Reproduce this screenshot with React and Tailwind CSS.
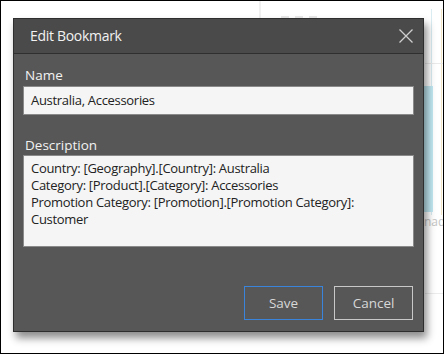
export default function App() {
  const font = { fontFamily: '"Open Sans", "Noto Sans", sans-serif' };
  return (
    <div className="w-[444px] h-[354px] border border-black bg-white relative overflow-hidden" style={font}>
      {/* faint background page */}
      <div className="absolute left-[258px] top-0 w-[2px] h-[20px] bg-[#f0f0f0]" />
      <div className="absolute left-[280px] top-[15px] flex gap-[6px]">
        <div className="w-[8px] h-[2px] bg-[#e8e8e8]" />
        <div className="w-[8px] h-[2px] bg-[#e8e8e8]" />
        <div className="w-[8px] h-[2px] bg-[#e8e8e8]" />
      </div>
      <div className="absolute left-[430px] top-[8px] w-[1px] h-[206px] bg-[#d8ecf2]" />
      <div className="absolute left-[440px] top-[8px] w-[1px] h-[206px] bg-[#f3e6c4]" />
      <div className="absolute left-[422px] top-[85px] w-[10px] h-[126px] bg-[#c2e9f3]" />
      <div className="absolute left-[423px] top-[213px] text-[12px] leading-[16px] text-[#c4c4c4]">nad</div>
      <div className="absolute left-[424px] top-[62px] w-[18px] h-[1px] bg-[#eaeaea]" />
      <div className="absolute left-[424px] top-[292px] w-[18px] h-[1px] bg-[#ececec]" />

      {/* dialog */}
      <div className="absolute left-[12px] top-[17px] w-[411px] h-[314px] border border-[#2e2e2e] bg-[#575757] shadow-[3px_6px_8px_rgba(0,0,0,0.45)] flex flex-col">
        <div className="h-[35px] bg-[#4a4a4a] border-b border-[#2f2f2f] flex items-center justify-between pl-[16px] pr-[8px]">
          <span className="text-[14px] text-[#f2f2f2] leading-none tracking-[-0.3px]">Edit Bookmark</span>
          <svg width="16" height="16" viewBox="0 0 16 16" className="mr-[1px] mt-[-1px]">
            <path d="M1.5 1.5 L14.5 14.5 M14.5 1.5 L1.5 14.5" stroke="#cfcfcf" strokeWidth="1.3" fill="none" />
          </svg>
        </div>
        <div className="flex flex-col px-[9px] pt-[12px] flex-1">
          <label className="text-[13.5px] text-[#f2f2f2] leading-[18px] pl-[2px]">Name</label>
          <div className="mt-[2px] h-[29px] border border-[#8a8a8a] bg-[#f5f5f5] flex items-center px-[7px] text-[13px] text-[#222] tracking-[-0.3px]">
            Australia, Accessories
          </div>
          <label className="mt-[21px] text-[13.5px] text-[#f2f2f2] leading-[18px] pl-[2px]">Description</label>
          <div className="mt-[1px] h-[92px] border border-[#8a8a8a] bg-[#f5f5f5] px-[7px] pt-[4px] text-[13px] leading-[17px] text-[#222] tracking-[-0.3px]">
            <div>Country: [Geography].[Country]: Australia</div>
            <div>Category: [Product].[Category]: Accessories</div>
            <div>Promotion Category: [Promotion].[Promotion Category]:</div>
            <div>Customer</div>
          </div>
          <div className="mt-auto mb-[11px] flex justify-end gap-[11px] pr-[1px]">
            <button className="w-[79px] h-[34px] border border-[#3a84dc] text-[13.5px] text-[#d8d8d8] bg-transparent">Save</button>
            <button className="w-[79px] h-[34px] border border-[#c8c8c8] text-[13.5px] text-[#d8d8d8] bg-transparent">Cancel</button>
          </div>
        </div>
      </div>
    </div>
  );
}
